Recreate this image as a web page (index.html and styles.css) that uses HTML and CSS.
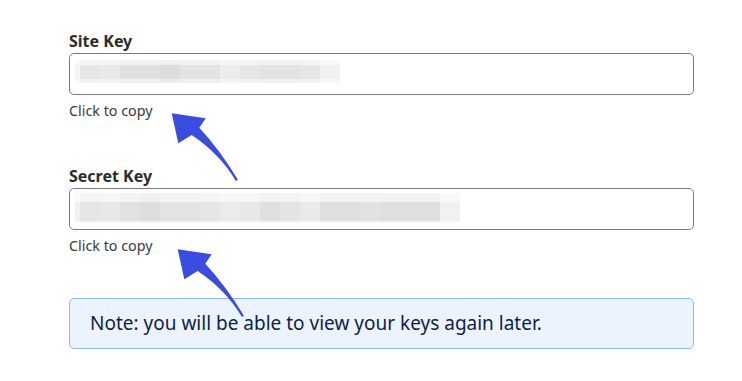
FILE: index.html
```html
<!DOCTYPE html>
<html lang="en">
<head>
<meta charset="utf-8">
<title>Keys</title>
<link rel="stylesheet" href="styles.css">
</head>
<body>
<main class="page">
  <div class="field">
    <label class="label">Site Key</label>
    <div class="input"><div class="blur blur-site"></div></div>
    <div class="help">Click to copy</div>
  </div>
  <div class="field">
    <label class="label">Secret Key</label>
    <div class="input"><div class="blur blur-secret"></div></div>
    <div class="help">Click to copy</div>
  </div>
  <div class="note">Note: you will be able to view your keys again later.</div>

  <svg class="arrow arrow-1" viewBox="0 0 100 90" width="100" height="90" aria-hidden="true">
    <path d="M11.7 13.3 L45.7 18.3 L39.3 27.7 Q60 50 77.6 79.2 Q77.4 81.2 75.6 80.6 Q60 54 31.7 35 L18.3 43.3 Z" fill="#3b4de0"/>
  </svg>
  <svg class="arrow arrow-2" viewBox="0 0 100 90" width="100" height="90" aria-hidden="true">
    <path d="M11.7 13.3 L45.7 18.3 L39.3 27.7 Q60 50 77.6 79.2 Q77.4 81.2 75.6 80.6 Q60 54 31.7 35 L18.3 43.3 Z" fill="#3b4de0"/>
  </svg>
</main>
</body>
</html>
```

FILE: styles.css
```css
* { box-sizing: border-box; }

html, body {
  margin: 0;
  padding: 0;
  background: #ffffff;
}

body {
  width: 742px;
  height: 381px;
  overflow: hidden;
  font-family: "Noto Sans", "Open Sans", sans-serif;
}

.page {
  position: relative;
  width: 742px;
  height: 381px;
  padding: 30px 48px 0 69px;
}

.field {
  display: flex;
  flex-direction: column;
  margin-bottom: 44px;
}

.field + .field {
  margin-bottom: 42px;
}

.label {
  display: block;
  font-size: 16px;
  line-height: 22px;
  font-weight: 700;
  color: #2b2b2b;
  margin-bottom: 1px;
}

.input {
  height: 42px;
  width: 625px;
  border: 1px solid #7b7b7b;
  border-radius: 5px;
  background: #ffffff;
  padding: 6px 0 0 5px;
}

.blur {
  height: 23px;
}

.blur-site {
  width: 265px;
  background:
    linear-gradient(to bottom, rgba(255,255,255,0.55) 0, rgba(255,255,255,0.55) 5px, rgba(255,255,255,0) 5px, rgba(255,255,255,0) 19px, rgba(255,255,255,0.45) 19px),
    linear-gradient(to right,
      #f3f3f3 0, #f3f3f3 5px,
      #e6e6e6 5px, #e6e6e6 25px,
      #e9e9e9 25px, #e9e9e9 45px,
      #e0e0e0 45px, #e0e0e0 85px,
      #dcdcdc 85px, #dcdcdc 105px,
      #e3e3e3 105px, #e3e3e3 145px,
      #ececec 145px, #ececec 165px,
      #e6e6e6 165px, #e6e6e6 185px,
      #e3e3e3 185px, #e3e3e3 225px,
      #e6e6e6 225px, #e6e6e6 245px,
      #f0f0f0 245px, #f0f0f0 265px);
}

.blur-secret {
  width: 385px;
  height: 30px;
  margin-top: -2px;
  background:
    linear-gradient(to bottom, rgba(255,255,255,0.6) 0, rgba(255,255,255,0.6) 9px, rgba(255,255,255,0) 9px, rgba(255,255,255,0) 28px, rgba(255,255,255,0.6) 28px),
    linear-gradient(to right,
      #f1f1f1 0, #f1f1f1 5px,
      #e6e6e6 5px, #e6e6e6 25px,
      #e8e8e8 25px, #e8e8e8 45px,
      #e1e1e1 45px, #e1e1e1 65px,
      #dddddd 65px, #dddddd 85px,
      #e3e3e3 85px, #e3e3e3 125px,
      #e6e6e6 125px, #e6e6e6 145px,
      #ebebeb 145px, #ebebeb 165px,
      #e8e8e8 165px, #e8e8e8 185px,
      #e0e0e0 185px, #e0e0e0 205px,
      #e4e4e4 205px, #e4e4e4 225px,
      #eaeaea 225px, #eaeaea 245px,
      #e0e0e0 245px, #e0e0e0 285px,
      #e2e2e2 285px, #e2e2e2 305px,
      #dfdfdf 305px, #dfdfdf 365px,
      #f1f1f1 365px, #f1f1f1 385px);
}

.help {
  margin-top: 6px;
  font-size: 14.3px;
  line-height: 20px;
  color: #3a3a3a;
}

.note {
  width: 625px;
  height: 51px;
  border: 1px solid #8fb7ee;
  border-radius: 5px;
  background: #ebf3fe;
  padding: 11px 20px;
  font-size: 19px;
  line-height: 27px;
  color: #0f1f45;
}

.arrow {
  position: absolute;
  overflow: visible;
}

.arrow-1 {
  left: 160px;
  top: 100px;
}

.arrow-2 {
  left: 166px;
  top: 236px;
}
```
